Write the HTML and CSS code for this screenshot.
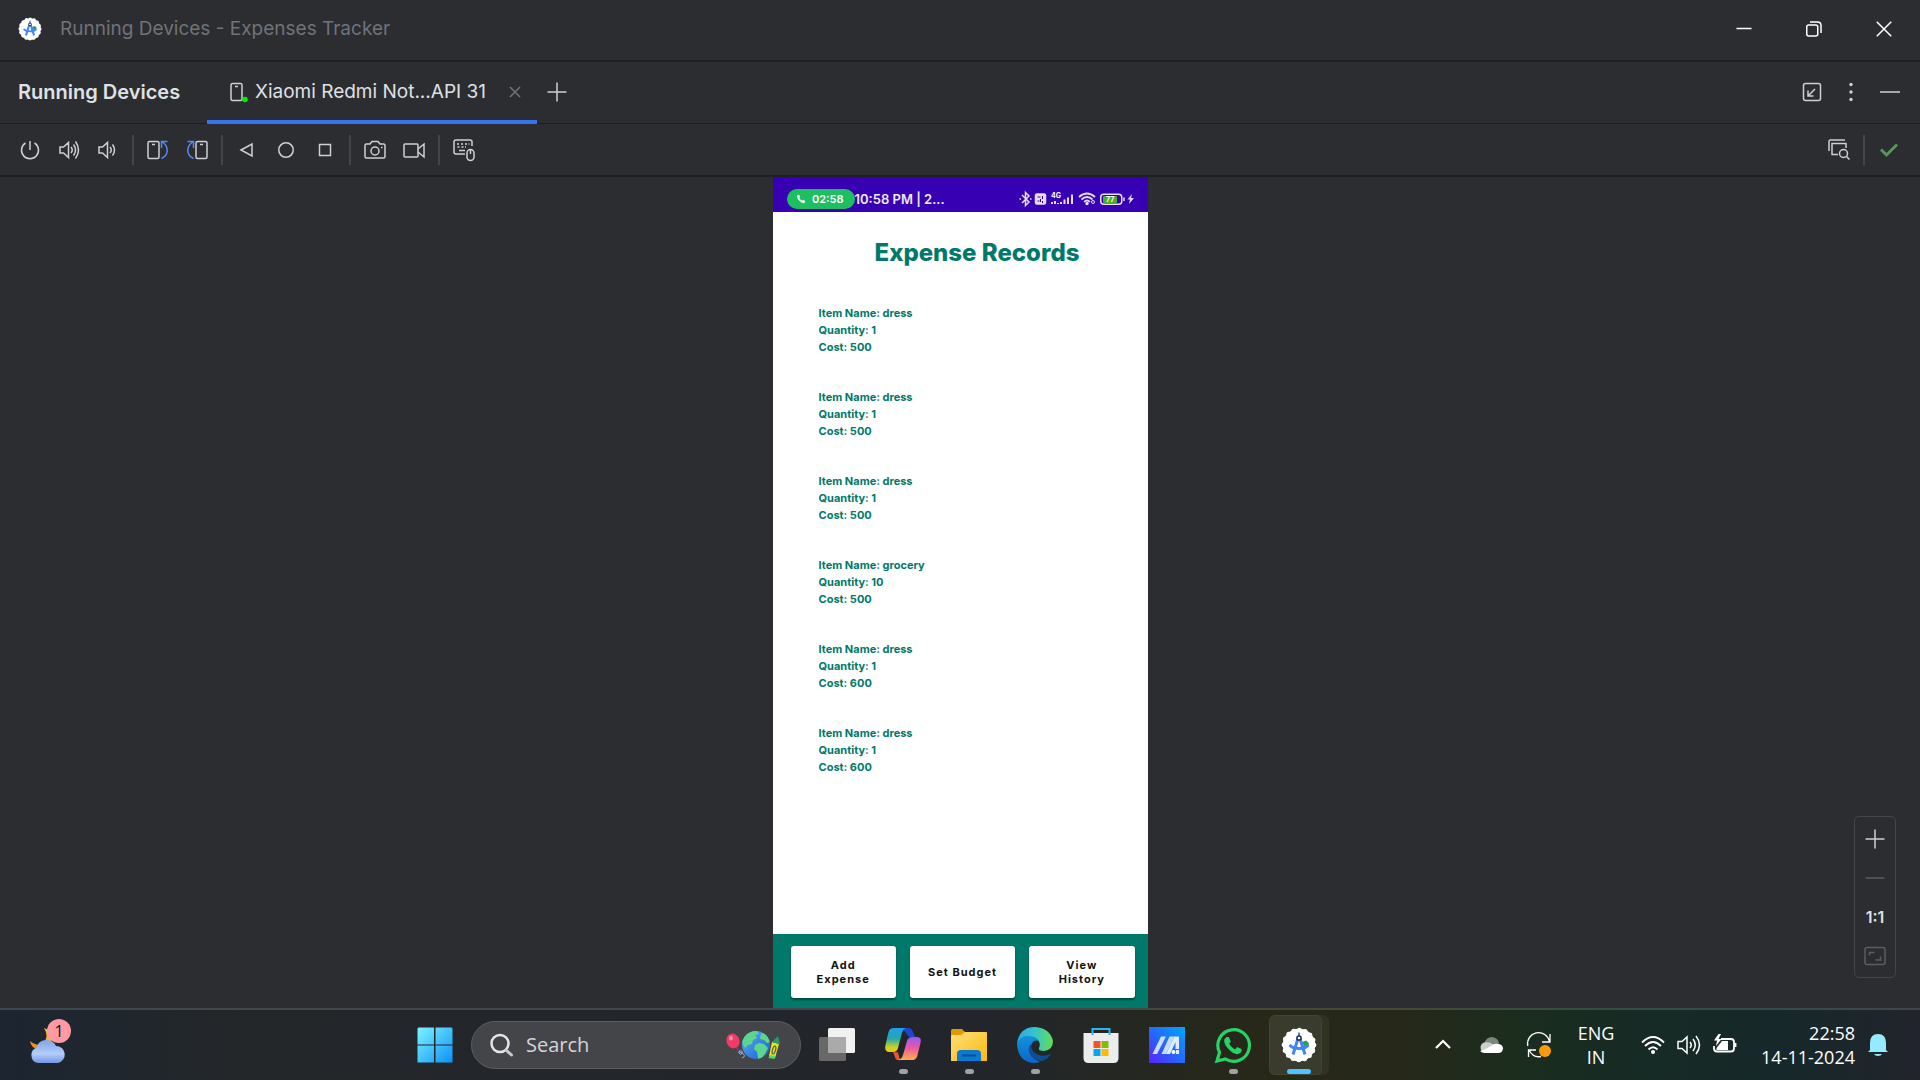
FILE: index.html
```html
<!DOCTYPE html>
<html lang="en">
<head>
<meta charset="utf-8">
<title>Running Devices - Expenses Tracker</title>
<link rel="stylesheet" href="styles.css">
</head>
<body>
<svg class="defs" aria-hidden="true">
  <defs>
    <linearGradient id="win" x1="0" y1="0" x2="1" y2="1"><stop offset="0" stop-color="#7df3ff"/><stop offset="1" stop-color="#0c92f8"/></linearGradient>
    <linearGradient id="cloud" x1="0" y1="0" x2="0" y2="1"><stop offset="0" stop-color="#7fa4ec"/><stop offset=".6" stop-color="#b4cdfa"/><stop offset="1" stop-color="#7396e4"/></linearGradient>
    <linearGradient id="moon" x1="0" y1="1" x2="1" y2="0"><stop offset="0" stop-color="#f0811b"/><stop offset="1" stop-color="#f9c93c"/></linearGradient>
    <linearGradient id="globe" x1="0" y1="0" x2="1" y2="1"><stop offset="0" stop-color="#59b7f5"/><stop offset="1" stop-color="#1c58cf"/></linearGradient>
    <clipPath id="globeClip"><circle cx="30" cy="16" r="14"/></clipPath>
    <linearGradient id="folder" x1="0" y1="0" x2="1" y2="1"><stop offset="0" stop-color="#ffe07a"/><stop offset="1" stop-color="#fbb90f"/></linearGradient>
    <linearGradient id="copA" x1="0" y1="0" x2="0" y2="1"><stop offset="0" stop-color="#1aa0f2"/><stop offset=".45" stop-color="#27a8a8"/><stop offset=".8" stop-color="#c9d22a"/><stop offset="1" stop-color="#f6c416"/></linearGradient>
    <linearGradient id="copB" x1="0" y1="0" x2="0" y2="1"><stop offset="0" stop-color="#9a57f0"/><stop offset=".5" stop-color="#ee5aa0"/><stop offset="1" stop-color="#fdb04d"/></linearGradient>
    <linearGradient id="edgeA" x1="0" y1="0" x2="1" y2="0"><stop offset="0" stop-color="#2aa8e8"/><stop offset=".5" stop-color="#35c5cd"/><stop offset="1" stop-color="#66dd50"/></linearGradient>
    <linearGradient id="edgeB" x1="0" y1="0" x2="0" y2="1"><stop offset="0" stop-color="#1590dc"/><stop offset="1" stop-color="#0a68c8"/></linearGradient>
    <linearGradient id="asus" x1="0" y1="1" x2="1" y2="0"><stop offset="0" stop-color="#5b21f5"/><stop offset=".5" stop-color="#236bfa"/><stop offset="1" stop-color="#00a6ff"/></linearGradient>
    <symbol id="studio" viewBox="0 0 36 36">
      <circle cx="18" cy="18" r="16.200" fill="#fff"/>
      <circle cx="18" cy="18" r="14.800" fill="none" stroke="#fff" stroke-width="5" stroke-dasharray="0 5.812" stroke-linecap="round"/>
      <path d="M21 15l4-1.500 2.500 2 .5 3.500-4 2z" fill="#2f9d55"/>
      <path d="M8.500 18q3 3.500 9.500 3.500t9-3" stroke="#4285f4" stroke-width="2.800" fill="none"/>
      <path d="M17 11.500L12 27.500M19 11.500l5 16" stroke="#4285f4" stroke-width="3" fill="none"/>
      <path d="M18 5.500v4" stroke="#4285f4" stroke-width="2"/>
      <circle cx="18" cy="11" r="2.100" fill="#fff" stroke="#22313f" stroke-width="1.500"/>
    </symbol>
  </defs>
</svg>

<header class="titlebar">
  <svg class="app-logo" viewBox="0 0 36 36" aria-hidden="true"><use href="#studio"/></svg>
  <span class="window-title">Running Devices - Expenses Tracker</span>
  <div class="window-controls">
    <button type="button" aria-label="Minimize"><svg width="16" height="16" viewBox="0 0 16 16"><path d="M.5 7.500h15"/></svg></button>
    <button type="button" aria-label="Restore"><svg width="16" height="16" viewBox="0 0 16 16"><rect x=".75" y="4" width="11" height="11" rx="2"/><path d="M4 1h7.500Q15 1 15 4.500V12"/></svg></button>
    <button type="button" aria-label="Close"><svg width="16" height="16" viewBox="0 0 16 16"><path d="M.75.75l14.500 14.500M15.250.75L.75 15.250"/></svg></button>
  </div>
</header>

<nav class="tabbar">
  <h1 class="tool-title">Running Devices</h1>
  <div class="tab">
    <svg width="18" height="20" viewBox="0 0 18 20" aria-hidden="true"><rect x="1" y="1.500" width="11" height="17" rx="1.500"/><path d="M5 4.500h3"/><circle cx="15" cy="17.500" r="2.800" fill="#00f000" stroke="none"/></svg>
    <a href="#device" class="tab-name">Xiaomi Redmi Not...API 31</a>
    <button type="button" class="tab-close" aria-label="Close tab"><svg width="12" height="12" viewBox="0 0 12 12"><path d="M1 1l10 10M11 1L1 11"/></svg></button>
  </div>
  <button type="button" class="icon-btn add-tab" aria-label="Add device"><svg width="20" height="20" viewBox="0 0 20 20"><path d="M10 .5v19M.5 10h19"/></svg></button>
  <div class="tab-actions">
    <button type="button" class="icon-btn" aria-label="Dock window"><svg width="20" height="20" viewBox="0 0 20 20"><rect x="1.500" y="1.500" width="17" height="17" rx="2"/><path d="M13 7l-7 7M6 8.500V14h5.500"/></svg></button>
    <button type="button" class="icon-btn" aria-label="Options"><svg width="20" height="20" viewBox="0 0 20 20" class="solid"><circle cx="10" cy="2.500" r="1.700"/><circle cx="10" cy="10" r="1.700"/><circle cx="10" cy="17.500" r="1.700"/></svg></button>
    <button type="button" class="icon-btn" aria-label="Hide"><svg width="20" height="20" viewBox="0 0 20 20"><path d="M0 10h20"/></svg></button>
  </div>
</nav>

<div class="toolbar" role="toolbar" aria-label="Device controls">
  <button type="button" class="icon-btn" aria-label="Power"><svg width="20" height="20" viewBox="0 0 20 20"><path d="M10 1v9M5.500 3A8.500 8.500 0 1 0 14.500 3"/></svg></button>
  <button type="button" class="icon-btn" aria-label="Volume up"><svg width="20" height="20" viewBox="0 0 20 20"><path d="M1 7h3.500L9.500 2.500v15L4.500 13H1zM12 7q2.500 3 0 6M14.500 4.500q4 5.500 0 11M16.500 1.500q6 8.500 0 17"/></svg></button>
  <button type="button" class="icon-btn" aria-label="Volume down"><svg width="20" height="20" viewBox="0 0 20 20"><path d="M1 7h3.500L9.500 2.500v15L4.500 13H1zM12 7q2.500 3 0 6M14.500 4.500q4 5.500 0 11"/></svg></button>
  <span class="divider"></span>
  <button type="button" class="icon-btn" aria-label="Rotate left"><svg width="22" height="20" viewBox="0 0 22 20"><rect x="1" y="1.500" width="11" height="17" rx="1.500"/><path d="M5 4.500h3"/><path class="blue" d="M14.500 18.500C22 15 22 7 15.500 2M14.500 8V1.500h6"/></svg></button>
  <button type="button" class="icon-btn" aria-label="Rotate right"><svg width="22" height="20" viewBox="0 0 22 20"><rect x="10" y="1.500" width="11" height="17" rx="1.500"/><path d="M14 4.500h3"/><path class="blue" d="M7.500 18.500C0 15 0 7 6.500 2M7.500 8V1.500h-6"/></svg></button>
  <span class="divider"></span>
  <button type="button" class="icon-btn" aria-label="Back"><svg width="20" height="20" viewBox="0 0 20 20"><path d="M4 10l11-6v12z"/></svg></button>
  <button type="button" class="icon-btn" aria-label="Home"><svg width="20" height="20" viewBox="0 0 20 20"><circle cx="10" cy="10" r="7.250"/></svg></button>
  <button type="button" class="icon-btn" aria-label="Overview"><svg width="20" height="20" viewBox="0 0 20 20"><rect x="4.500" y="4.500" width="11" height="11"/></svg></button>
  <span class="divider"></span>
  <button type="button" class="icon-btn" aria-label="Take screenshot"><svg width="22" height="20" viewBox="0 0 22 20"><path d="M2.500 4H6l2-2.500h6L16 4h3.500Q21 4 21 5.500v11q0 1.500-1.500 1.500h-17Q1 18 1 16.500v-11Q1 4 2.500 4z"/><circle cx="11" cy="11" r="4"/><path d="M17 7.500h1.500"/></svg></button>
  <button type="button" class="icon-btn" aria-label="Record screen"><svg width="22" height="20" viewBox="0 0 22 20"><rect x="1" y="4" width="14" height="13" rx="1"/><path d="M15 9l6-5v13l-6-5"/></svg></button>
  <span class="divider"></span>
  <button type="button" class="icon-btn" aria-label="Hardware input"><svg width="22" height="22" viewBox="0 0 22 22"><path d="M12 15H3q-2 0-2-2V3q0-2 2-2h14q2 0 2 2v4"/><path d="M4 5h2M8 5h2M12 5h2M15.500 5h1M4.500 8h2M8.500 8h2M12 8h1M6 11.500h6"/><rect x="14" y="10.500" width="7" height="11" rx="3.500"/><path d="M17.500 11v4"/></svg></button>
  <div class="toolbar-end">
    <button type="button" class="icon-btn" aria-label="Inspect"><svg width="22" height="22" viewBox="0 0 22 22"><path d="M1 12V2.500Q1 1 2.500 1H17M10 15.500H4V4.500h14V9"/><circle cx="15.500" cy="14.500" r="4"/><path d="M18.500 17.500l3 3"/></svg></button>
    <span class="divider"></span>
    <svg class="check" width="20" height="20" viewBox="0 0 20 20" role="img" aria-label="OK"><path d="M2 9.500l5.500 5.500L18 4.500"/></svg>
  </div>
</div>

<main class="canvas" id="device">
  <section class="phone">
    <div class="status">
      <span class="call-pill"><svg width="10" height="10" viewBox="0 0 10 10" aria-hidden="true"><path d="M1 1.500L3 .8l1.200 2-1 1.200Q4.300 5.800 6 6.800l1.200-1 2 1.200-.7 2Q7 9.800 4.200 7.500.7 4.500 1 1.500z" fill="#fff"/></svg>02:58</span>
      <span class="status-time">10:58 PM | 2...</span>
      <svg class="status-icons" width="116" height="18" viewBox="0 0 116 18" aria-hidden="true">
        <g fill="none" stroke="#e6def8" stroke-width="1.500">
          <path d="M3 5l7 7-3.500 3.500v-13L10 6l-7 7"/><path d="M.5 9h1.500M11 9h1.500"/>
          <rect x="16.500" y="4" width="10" height="10" rx="1.500" fill="#e6def8"/>
          <path d="M33 12v2M36 11v3M39 13v1M42 12v2M45.500 9.500v4.500M49 7.500v6.500M53 4.500v9.500" stroke-width="2"/>
          <path d="M60 7q8-7 16 0M62.500 9.500q5.500-5 11 0M65 12q3-3 6 0" stroke-width="1.700"/>
          <circle cx="68" cy="13.500" r="1" fill="#e6def8"/><circle cx="74" cy="12" r="1.500" stroke-width="1"/>
          <rect x="81.750" y="4.250" width="21" height="10" rx="3"/><path d="M105 7.500v3.500"/>
        </g>
        <path d="M18.500 7h3M23.500 6v3M18.500 11h2M23.500 11v2M21.500 9v3" stroke="#3700b3" fill="none"/>
        <rect x="84" y="6" width="14" height="7" rx="1" fill="#4caf1f"/>
        <path d="M113 4l-4.500 5.500h2.500L110 14l5-6h-3z" fill="#e6def8"/>
        <text x="32" y="8" class="tiny">4G</text>
        <text x="87" y="12" class="tiny">77</text>
      </svg>
    </div>
    <h2 class="screen-title">Expense Records</h2>
    <ul class="records">
      <li><p>Item Name: dress</p><p>Quantity: 1</p><p>Cost: 500</p></li>
      <li><p>Item Name: dress</p><p>Quantity: 1</p><p>Cost: 500</p></li>
      <li><p>Item Name: dress</p><p>Quantity: 1</p><p>Cost: 500</p></li>
      <li><p>Item Name: grocery</p><p>Quantity: 10</p><p>Cost: 500</p></li>
      <li><p>Item Name: dress</p><p>Quantity: 1</p><p>Cost: 600</p></li>
      <li><p>Item Name: dress</p><p>Quantity: 1</p><p>Cost: 600</p></li>
    </ul>
    <div class="actions">
      <button type="button">Add Expense</button>
      <button type="button">Set Budget</button>
      <button type="button">View History</button>
    </div>
  </section>
  <div class="zoom-panel">
    <button type="button" aria-label="Zoom in"><svg width="20" height="20" viewBox="0 0 20 20"><path d="M10 .5v19M.5 10h19"/></svg></button>
    <button type="button" class="dim" aria-label="Zoom out"><svg width="20" height="20" viewBox="0 0 20 20"><path d="M.5 10h19"/></svg></button>
    <button type="button">1:1</button>
    <button type="button" class="dim" aria-label="Zoom to fit"><svg width="22" height="20" viewBox="0 0 22 20"><rect x="1" y="1.500" width="20" height="17" rx="2"/><path d="M5.500 9.500V6.500h5M16.500 10.500v3.500h-5"/></svg></button>
  </div>
</main>

<footer class="taskbar">
  <button type="button" class="weather" aria-label="Weather">
    <svg width="36" height="36" viewBox="0 0 36 36"><path d="M14 1q5 8 0 14T0 14q1 7 8 8h10l5-12Q20 3 14 1z" fill="url(#moon)"/><path d="M8 36a8 8 0 0 1-1-15.500Q8 13 16.500 13q7 0 9.500 6a8.600 8.600 0 0 1 2 17z" fill="url(#cloud)"/></svg>
    <span class="badge">1</span>
  </button>
  <div class="task-center">
    <button type="button" class="task" aria-label="Start"><svg width="36" height="36" viewBox="0 0 36 36"><path d="M1.500.5H17v17H.5v-16zM18.500.5h16l1 1v16h-17zM.5 18.500H17v17H.5zM18.500 18.500h17v17h-17z" fill="url(#win)"/></svg></button>
    <label class="search">
      <svg width="24" height="24" viewBox="0 0 24 24" aria-hidden="true"><circle cx="11" cy="10.500" r="8.500" fill="none" stroke="#e4e5e6" stroke-width="2.500"/><path d="M17 17l5.500 5" stroke="#c9cacb" stroke-width="3" stroke-linecap="round"/></svg>
      <input type="text" placeholder="Search" aria-label="Search">
      <svg width="56" height="32" viewBox="0 0 56 32" aria-hidden="true">
        <ellipse cx="7" cy="12" rx="6.500" ry="7.500" fill="#f23a68" transform="rotate(-20 7 12)"/><ellipse cx="5" cy="9" rx="2" ry="2.500" fill="#ff8ca8"/><path d="M10 18l3 2-2 1z" fill="#d92455"/><path d="M13 22q4-1 3 2t-3 0 3 0 0 5" stroke="#a9b0c8" fill="none"/>
        <circle cx="30" cy="16" r="14" fill="url(#globe)"/>
        <g clip-path="url(#globeClip)" fill="#5cd68c">
          <path d="M17 8q6-7 14-6l2 3-4 1 2 3-4 2-1 4-4 1-3 3-3-6z"/>
          <path d="M29 16l4-2 5 1 4 4-3 6-5 6-2-1-1-7-3-3z"/>
          <path d="M35 4l6 1 4 8-4 1-3-3-4-1z"/>
        </g>
        <path d="M46 13l7 2-4 14-6-2z" fill="#e4e334"/><path d="M46 13l6-6 2 8z" fill="#249a6c"/><path d="M43.500 26l6 1-1 3-6-1z" fill="#4fdc69"/><ellipse cx="48" cy="21" rx="1.500" ry="4" fill="none" stroke="#56682c" stroke-width="1.300" transform="rotate(15 48 21)"/>
      </svg>
    </label>
    <button type="button" class="task" aria-label="Task view"><svg width="36" height="36" viewBox="0 0 36 36"><rect y="10" width="27" height="24" rx="1.500" fill="#686868"/><rect x="9" y="1" width="27" height="25" rx="1.500" fill="#f1f1f1"/><path d="M9 10h18v16H9z" fill="#aaa"/></svg></button>
    <button type="button" class="task open" aria-label="Copilot"><svg width="36" height="36" viewBox="0 0 36 36"><path d="M17 1h6q4 0 5 4l2 5h-6z" fill="#1c46cf"/><path d="M8 25l5 .5L15 33q-4 1-5-3z" fill="#f0552e"/><path d="M8 1h13q-3 1-4 5l-4 15q-1 4-5 4H4q-5 0-3.500-7L3 7q1-6 5-6z" fill="url(#copA)"/><path d="M28 33H13q4-1 5-5l4-14q1-4 6-4h4q5 0 3.500 6L33 26q-1 7-5 7z" fill="url(#copB)"/></svg></button>
    <button type="button" class="task open" aria-label="File Explorer"><svg width="36" height="36" viewBox="0 0 36 36"><path d="M0 3.500Q0 2 1.500 2H11l4 4-4 5H0z" fill="#dd9c05"/><path d="M0 9q0-1 1-1h9l4-3h21q1 0 1 1v28H0z" fill="url(#folder)"/><path d="M6 34V27q0-4 4-4h16q4 0 4 4v7z" fill="#0d78cf"/><path d="M11 28.500h14" stroke="#06519b" stroke-width="2"/></svg></button>
    <button type="button" class="task open" aria-label="Edge"><svg width="36" height="36" viewBox="0 0 36 36"><path d="M0 17Q2 0 18 0q15 1 18 14 0 9-9 10-6 0-5-3 2-4-1-8Q10 6 0 17z" fill="url(#edgeA)"/><path d="M0 17Q2 9 11 9q8 0 11 5-6-2-8 5-2 11 9 16-3 1-6 1Q1 35 0 17z" fill="url(#edgeB)"/><path d="M14 17q-3 3-2 8 3 9 13 9 6-2 9-7-10 4-16-1-4-3-4-9z" fill="#0f4e94"/></svg></button>
    <button type="button" class="task" aria-label="Microsoft Store"><svg width="36" height="36" viewBox="0 0 36 36"><path d="M.5 6h35v25q0 5-5 5h-25q-5 0-5-5z" fill="#ececec"/><path d="M9.500 8V2h17v6" fill="none" stroke="#2cb5ee" stroke-width="2"/><path d="M10.500 14h7v7h-7z" fill="#f35325"/><path d="M18.500 14h7v7h-7z" fill="#81bc06"/><path d="M10.500 22h7v7h-7z" fill="#05a6f0"/><path d="M18.500 22h7v7h-7z" fill="#ffba08"/></svg></button>
    <button type="button" class="task" aria-label="MyASUS"><svg width="36" height="36" viewBox="0 0 36 36"><path d="M0 0h36v36H0z" fill="url(#asus)"/><path d="M12 9.500h5L8 27H3.500zM20.500 9.500h5L17 27h-4.500z" fill="#c9dcff"/><path d="M25.500 9.500H30V22h-3.500v-7L21 27h-4z" fill="#e2ecff"/><circle cx="24.500" cy="25" r="2" fill="#fff"/><path d="M27 23h3v4h-3z" fill="#e2ecff"/></svg></button>
    <button type="button" class="task open" aria-label="WhatsApp"><svg width="36" height="36" viewBox="0 0 36 36"><path d="M2 34l2.500-8.500A15.800 15.800 0 1 1 10.500 32z" fill="none" stroke="#25d366" stroke-width="3.200"/><path d="M11.500 10h2.300l2 4.500-1.600 2.300q2 3.800 5.800 5.600l2.200-2.400 4.600 2.200q.2 4-4.500 5Q18 27 13 21.500 8 16 9.500 12z" fill="#25d366"/></svg></button>
    <button type="button" class="task active" aria-label="Android Studio"><svg width="36" height="36" viewBox="0 0 36 36"><use href="#studio"/></svg></button>
  </div>
  <div class="tray">
    <button type="button" class="tray-btn" aria-label="Show hidden icons"><svg width="24" height="24" viewBox="0 0 24 24"><path d="M5 15l7-7 7 7" stroke-width="2.200"/></svg></button>
    <button type="button" class="tray-btn" aria-label="OneDrive"><svg width="24" height="24" viewBox="0 0 24 24" class="fill"><path d="M5 11q2-7 8-7 6 1 7 6l-6 6z" fill="#7b8680"/><path d="M6 20a5.500 5.500 0 0 1-1-10.500q6-1 9 2l5 5-4 3.500z" fill="#c9cfcb"/><path d="M6 20q-3 0-5-2 9-3 14-7 8-1 9 4 0 5-5 5z" fill="#fff"/></svg></button>
    <button type="button" class="tray-btn" aria-label="Windows Update"><svg width="24" height="24" viewBox="0 0 24 24"><path d="M.75 13A11 11 0 0 1 22.500 8.500M23 1v8h-8M1.500 24v-7H9M2 17q4 8 12 6.500" stroke-width="1.300"/><circle cx="18" cy="18" r="6" fill="#ff9a0a" stroke="none"/></svg></button>
    <button type="button" class="language">ENG<br>IN</button>
    <button type="button" class="quick" aria-label="Network, volume and battery">
      <svg width="24" height="24" viewBox="0 0 24 24"><path d="M1 9.500q11-11 22 0M4 13q8-8 16 0M7.500 16.500q4.500-4.500 9 0" stroke-width="1.800"/><circle cx="12" cy="19" r="2" fill="#fff" stroke="none"/></svg>
      <svg width="24" height="24" viewBox="0 0 24 24"><path d="M1 8.500h4L10 4v16l-5-4.500H1zM13 9q2.500 3 0 6M16 6q4.500 6 0 12M19 3q7 9 0 18"/></svg>
      <svg width="24" height="24" viewBox="0 0 24 24"><path d="M8 6h10q3 0 3 3v6.500q0 3-3 3H4q-3 0-3-3V13M22.500 10v4" stroke-width="1.800"/><path d="M9 8h6v9H3.500v-2z" fill="#fff" stroke="none"/><path d="M5.500 1L1 7.500h3L3 13l5.500-7h-3L8 1z" fill="#fff" stroke="none"/></svg>
    </button>
    <button type="button" class="clock"><span>22:58<br>14-11-2024</span>
      <svg width="20" height="24" viewBox="0 0 20 24" class="fill" aria-hidden="true"><path d="M2 17V10q0-9 8-9t8 9v7l2 2H0zM6 21h8q-1 2-4 2t-4-2z" fill="#94eaff"/></svg>
    </button>
  </div>
</footer>
</body>
</html>
```

FILE: styles.css
```css
* { box-sizing: border-box; }

body {
  margin: 0;
  min-height: 100vh;
  display: flex;
  flex-direction: column;
  background: #2b2d30;
  color: #dfe1e5;
  font: 20px/24px Inter, "Liberation Sans", sans-serif;
}

h1, h2, p, ul { margin: 0; padding: 0; list-style: none; font-size: inherit; }
a { color: inherit; text-decoration: none; }
svg { display: block; flex: none; overflow: visible; }
.defs { position: absolute; width: 0; height: 0; }

button {
  display: flex;
  align-items: center;
  justify-content: center;
  margin: 0;
  padding: 0;
  border: 0;
  background: none;
  color: inherit;
  font: inherit;
}
button svg, .tab > svg { fill: none; stroke: #ced0d6; stroke-width: 1.5; }

/* Window title */
.titlebar {
  display: flex;
  align-items: center;
  height: 62px;
  padding: 0 1px 2px 18px;
  border-bottom: 2px solid #1e1f22;
}
.app-logo { width: 24px; height: 24px; margin-right: 18px; }
.window-title { color: #6f737a; font-size: 19px; }
.window-controls { display: flex; margin-left: auto; }
.window-controls button { width: 70px; height: 56px; }
.window-controls svg { stroke: #fff; }

/* Tool window tabs */
.tabbar {
  display: flex;
  align-items: stretch;
  height: 62px;
  padding: 0 20px 0 18px;
  border-bottom: 1px solid #1e1f22;
}
.tool-title { width: 189px; align-self: center; padding-bottom: 2px; font-weight: 600; }
.tab {
  display: flex;
  align-items: center;
  width: 330px;
  margin-bottom: -1px;
  padding: 0 16px 2px 23px;
  background: linear-gradient(#3574f0, #3574f0) bottom / 100% 4px no-repeat;
}
.tab-name { margin-left: 7px; font-size: 19px; }
.tab-close { margin-left: auto; }
.tab-close svg { stroke: #6f737a; }
.icon-btn { width: 39px; height: 36px; }
.add-tab { align-self: center; padding-bottom: 2px; }
.tab-actions { display: flex; align-items: center; margin-left: auto; padding-bottom: 2px; }
.tab-actions .icon-btn:last-child { width: 20px; margin-left: 10px; }
button .solid { fill: #ced0d6; stroke: none; }

/* Device toolbar */
.toolbar {
  display: flex;
  align-items: center;
  height: 53px;
  padding: 0 21px 0 10px;
  border-bottom: 2px solid #1e1f22;
}
.divider { width: 2px; height: 30px; margin: 0 4px 0 5px; background: #43454a; }
.toolbar .blue { stroke: #548af7; }
.toolbar-end { display: flex; align-items: center; margin-left: auto; }
.toolbar-end .divider { margin-right: 14px; }
.check { fill: none; stroke: #57965c; stroke-width: 3; }

/* Mirrored device */
.canvas {
  position: relative;
  flex: 1;
  display: flex;
  justify-content: center;
}
.phone {
  display: flex;
  flex-direction: column;
  width: 375px;
  background: #fff;
  color: #00796b;
}
.status {
  display: flex;
  align-items: center;
  height: 35px;
  padding: 9px 13px 0 14px;
  background: #3700b3;
  color: #f0eafb;
  font-size: 13px;
  font-weight: 600;
  line-height: 20px;
}
.call-pill {
  display: flex;
  align-items: center;
  justify-content: space-between;
  width: 68px;
  height: 20px;
  padding: 0 11px 0 9px;
  border-radius: 10px;
  background: #1dbf60;
  color: #fff;
  font-size: 11px;
}
.status-icons { margin-left: auto; }
.tiny { fill: #fff; font-size: 7px; font-weight: 700; }
.screen-title {
  margin: 25px 0 0 102px;
  font-size: 24px;
  line-height: 32px;
  font-weight: 800;
}
.records {
  flex: 1;
  display: flex;
  flex-direction: column;
  gap: 33px;
  padding: 36px 46px;
  font-size: 11px;
  line-height: 17px;
  font-weight: 700;
}
.actions {
  display: grid;
  grid-template-columns: repeat(3, 1fr);
  gap: 14px;
  padding: 12px 13px 10px 18px;
  background: #00796b;
}
.actions button {
  height: 52px;
  padding: 0 14px;
  border-radius: 3px;
  background: #fff;
  box-shadow: 0 2px 2px #0006;
  color: #111;
  font-size: 11px;
  line-height: 14px;
  font-weight: 700;
  letter-spacing: 1px;
}
.zoom-panel {
  position: absolute;
  right: 24px;
  bottom: 30px;
  display: flex;
  flex-direction: column;
  width: 42px;
  padding: 2px 0;
  border: 1px solid #43454a;
  border-radius: 5px;
}
.zoom-panel button { height: 39px; font-size: 16px; font-weight: 600; }
.zoom-panel .dim svg { stroke: #5a5d63; }

/* Taskbar */
.taskbar {
  display: grid;
  grid-template-columns: 1fr auto 591px;
  align-items: center;
  height: 72px;
  border-top: 2px solid #ffffff26;
  background: linear-gradient(90deg, #1c2530, #23272a 12%, #22262a 52%, #272818 66%, #26281a 73%, #1b2d1e 79%, #172b24 84%, #16282a 93%, #22242c) border-box;
  color: #fff;
  font-family: "Open Sans", "Noto Sans", sans-serif;
  font-size: 18px;
}
.weather { position: relative; justify-self: start; margin-left: 30px; }
.weather svg { stroke: none; }
.badge {
  position: absolute;
  left: 17px;
  top: -8px;
  width: 24px;
  height: 24px;
  border-radius: 50%;
  background: #ff99a4;
  color: #111;
  font-size: 16px;
}
.task-center { display: flex; align-items: center; gap: 6px; }
.task {
  position: relative;
  width: 60px;
  height: 60px;
}
.task svg { position: relative; stroke: none; }
.open::after, .active::after {
  content: "";
  position: absolute;
  bottom: 1px;
  width: 9px;
  height: 5px;
  border-radius: 3px;
  background: #a0a1a2;
}
.active { border-radius: 6px; background: #ffffff0c; }
.active::before {
  content: "";
  position: absolute;
  inset: 0 7px 0 0;
  border: 1px solid #ffffff0c;
  border-radius: 6px;
  background: #ffffff0c;
}
.active::after { width: 24px; background: #4cc2ff; }
.search {
  display: flex;
  align-items: center;
  width: 330px;
  height: 48px;
  padding: 0 18px 0 17px;
  border: 1px solid #5b5d60;
  border-radius: 24px;
  background: #434548;
}
.search input {
  flex: 1;
  min-width: 0;
  padding: 0 13px;
  border: 0;
  background: none;
  color: #d4d5d6;
  font: inherit;
  font-size: 20px;
}
.search input::placeholder { color: #d4d5d6; opacity: 1; }
.tray { display: flex; justify-content: flex-end; }
.tray button { height: 60px; }
.tray svg { stroke: #fff; }
.tray .fill { stroke: none; }
.tray-btn { width: 48px; }
.language { width: 66px; }
.quick { gap: 12px; padding: 0 12px; }
.clock { width: 171px; justify-content: flex-end; gap: 13px; padding-right: 32px; text-align: right; }
```
